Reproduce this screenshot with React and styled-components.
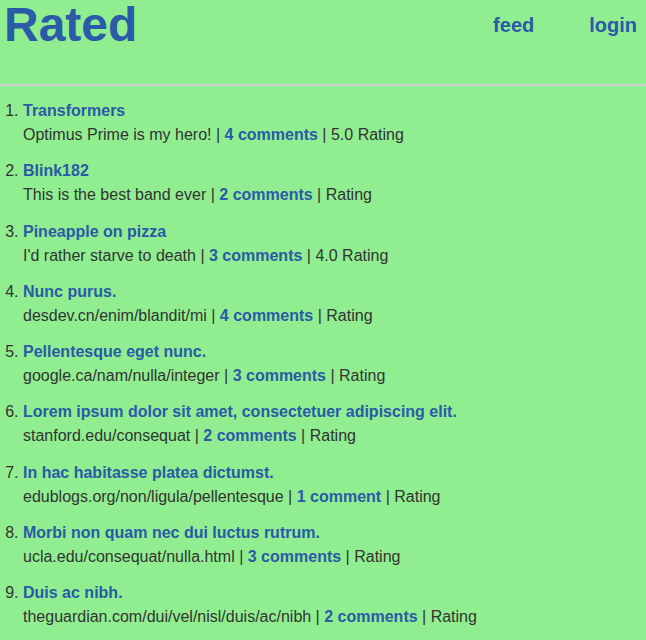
import React from 'react'
import styled, { createGlobalStyle } from 'styled-components'

const GlobalStyle = createGlobalStyle`
  html, body {
    margin: 0;
    padding: 0;
    background: #90EE90;
  }
  body {
    font-family: "Liberation Sans", Arial, sans-serif;
    color: #333;
  }
`

const Header = styled.header`
  display: flex;
  justify-content: space-between;
  align-items: flex-start;
  height: 84px;
  padding: 0 9px 0 4px;
  border-bottom: 2px solid #cfcfcf;
`
const Logo = styled.h1`
  margin: 0;
  padding-top: 1px;
  font-size: 48px;
  line-height: 48px;
  font-weight: bold;
  color: #2a5aa8;
`
const Nav = styled.nav`
  display: flex;
  gap: 55px;
  padding-top: 14px;
`
const NavLink = styled.a`
  font-size: 20px;
  font-weight: bold;
  color: #2a5aa8;
  text-decoration: none;
  cursor: pointer;
`
const List = styled.ol`
  margin: 0;
  padding: 13px 0 0 23px;
  font-size: 16px;
  line-height: 24px;
`
const Item = styled.li`
  margin-bottom: 12.25px;
`
const Title = styled.a`
  display: block;
  font-weight: bold;
  color: #2a5aa8;
  text-decoration: none;
`
const Meta = styled.div`
  color: #333;
`
const Comments = styled.a`
  font-weight: bold;
  color: #2a5aa8;
  text-decoration: none;
`

const posts = [
  { title: 'Transformers', sub: 'Optimus Prime is my hero!', comments: 4, rating: '5.0' },
  { title: 'Blink182', sub: 'This is the best band ever', comments: 2 },
  { title: 'Pineapple on pizza', sub: "I'd rather starve to death", comments: 3, rating: '4.0' },
  { title: 'Nunc purus.', sub: 'desdev.cn/enim/blandit/mi', comments: 4 },
  { title: 'Pellentesque eget nunc.', sub: 'google.ca/nam/nulla/integer', comments: 3 },
  { title: 'Lorem ipsum dolor sit amet, consectetuer adipiscing elit.', sub: 'stanford.edu/consequat', comments: 2 },
  { title: 'In hac habitasse platea dictumst.', sub: 'edublogs.org/non/ligula/pellentesque', comments: 1 },
  { title: 'Morbi non quam nec dui luctus rutrum.', sub: 'ucla.edu/consequat/nulla.html', comments: 3 },
  { title: 'Duis ac nibh.', sub: 'theguardian.com/dui/vel/nisl/duis/ac/nibh', comments: 2 },
]

function App() {
  return (
    <>
      <GlobalStyle />
      <Header>
        <Logo>Rated</Logo>
        <Nav>
          <NavLink>feed</NavLink>
          <NavLink>login</NavLink>
        </Nav>
      </Header>
      <List>
        {posts.map((post, i) =>
          <Item key={i}>
            <Title>{post.title}</Title>
            <Meta>
              {post.sub} | <Comments>{post.comments} {post.comments === 1 ? 'comment' : 'comments'}</Comments> | {post.rating ? post.rating + ' ' : ''}Rating
            </Meta>
          </Item>
        )}
      </List>
    </>
  )
}

export default App
